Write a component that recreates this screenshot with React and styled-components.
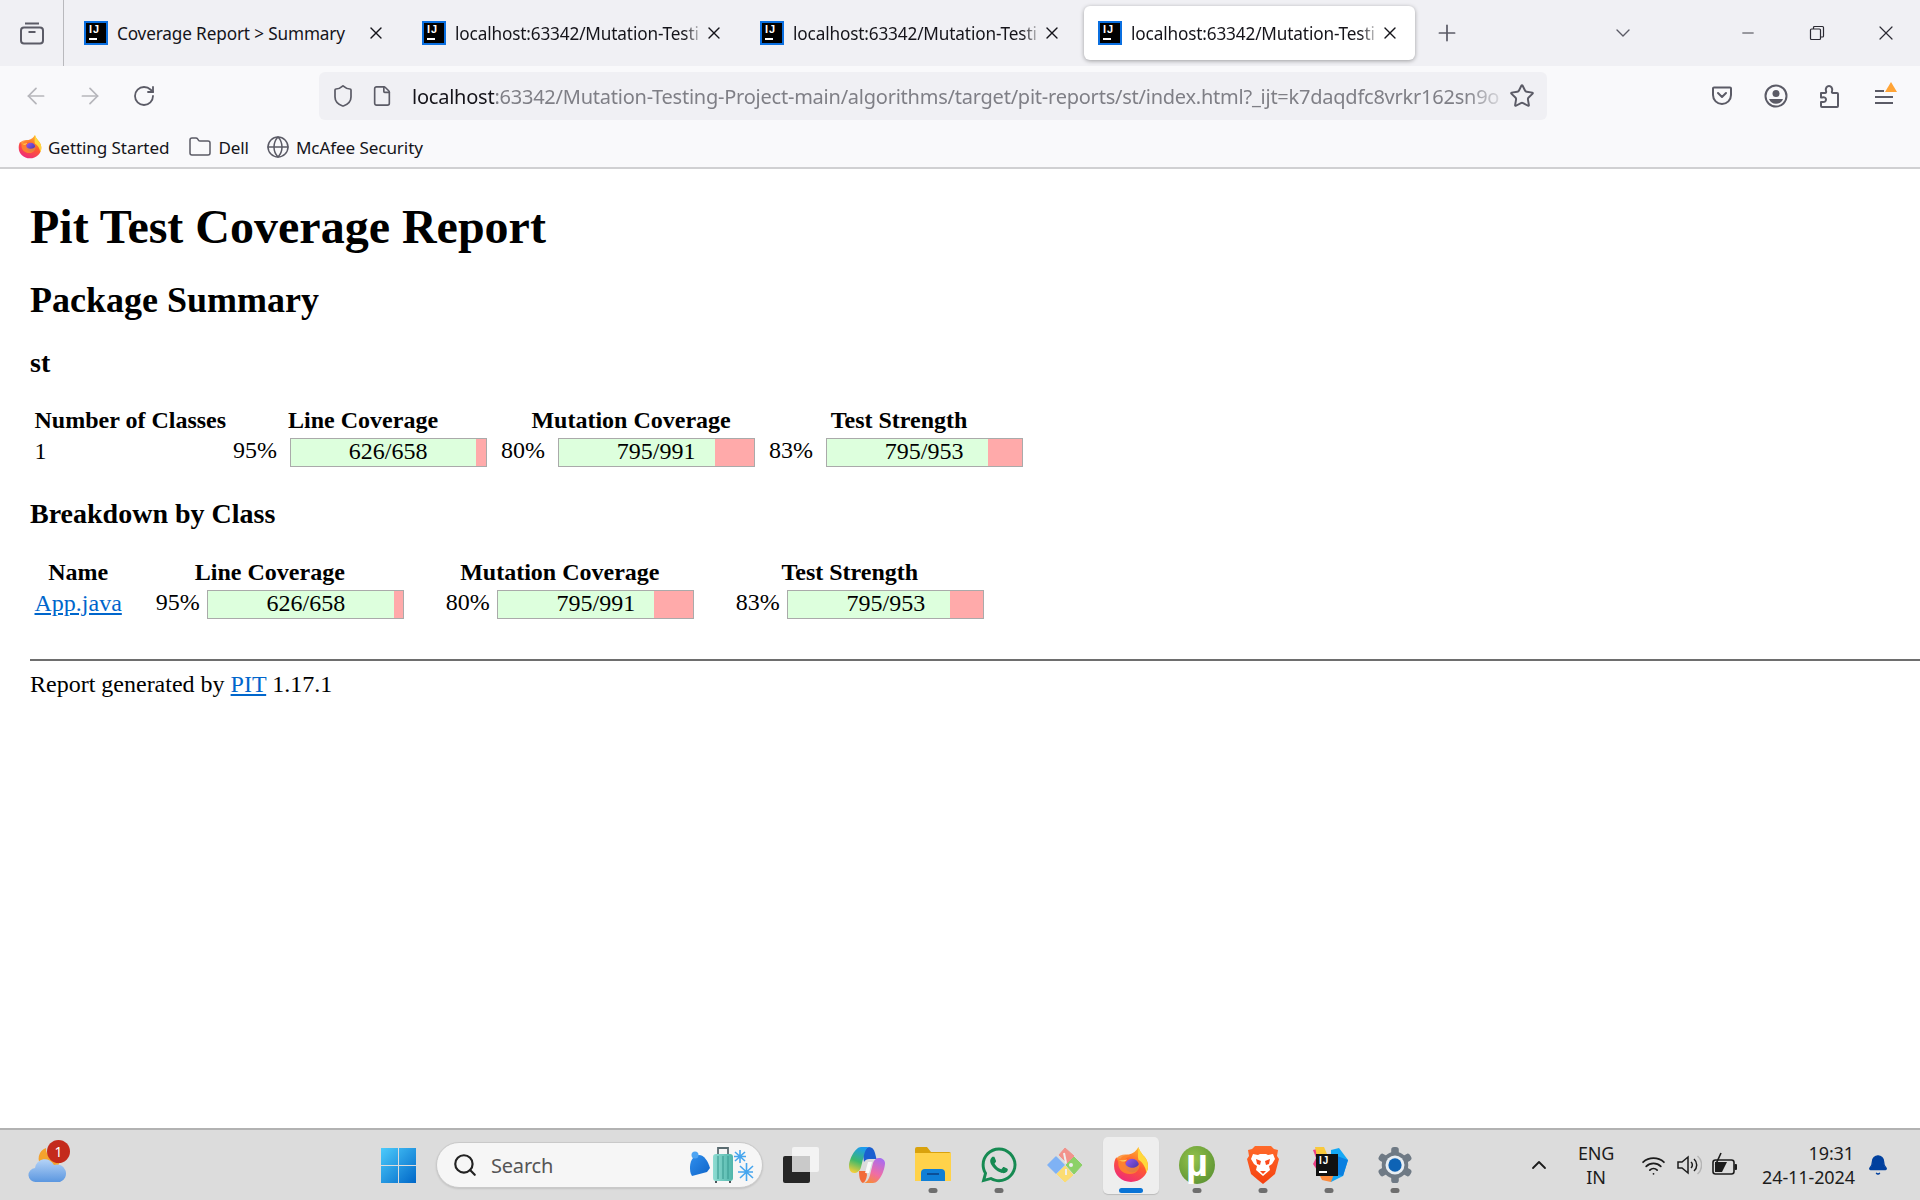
import React from "react";
import styled, { createGlobalStyle } from "styled-components";
import {
  ArrowLeft, ArrowRight, RotateCw, Shield, File, Star, X, Plus, ChevronDown, ChevronUp,
  Minus, Folder, Globe, Search, Wifi, Bell,
} from "lucide-react";
import { FaWhatsapp } from "react-icons/fa";

const Global = createGlobalStyle`
  html, body { margin: 0; padding: 0; background: #fff; }
  body { font-family: "Liberation Serif", "Times New Roman", serif; font-size: 24px; color: #000; }
`;

const uiFont = `"Noto Sans", "Open Sans", sans-serif`;

const Screen = styled.div`
  width: 1920px; height: 1200px; display: flex; flex-direction: column; overflow: hidden;
`;

/* ---------- browser chrome ---------- */
const TabBar = styled.div`
  height: 66px; background: #f0f0f4; display: flex; align-items: flex-start; flex: none;
  font-family: ${uiFont}; color: #15141a;
`;
const ViewButton = styled.div`
  width: 64px; height: 66px; box-sizing: border-box; border-right: 1px solid #b9b9bd; flex: none;
  display: flex; align-items: center; justify-content: center; color: #5b5b66;
`;
const TabList = styled.div`
  display: flex; gap: 7px; padding: 6px 0 0 6px; flex: none;
`;
const Tab = styled.div`
  width: 331px; height: 54px; box-sizing: border-box; padding: 0 15px 0 14px; display: flex; align-items: center;
  border-radius: 6px; flex: none;
  background: ${p => (p.$active ? "#fff" : "transparent")};
  box-shadow: ${p => (p.$active ? "0 1px 4px rgba(0,0,0,.35)" : "none")};
`;
const Favicon = styled.div`
  width: 24px; height: 24px; box-sizing: border-box; background: #000; border: 2px solid #0a6fe0;
  color: #fff; position: relative; flex: none; font: bold 11px/12px "Liberation Sans", sans-serif;
  padding-left: 3px; letter-spacing: 1px;
  &::after { content: ""; position: absolute; left: 3px; bottom: 3px; width: 8px; height: 2px; background: #fff; }
`;
const TabLabel = styled.div`
  flex: 1; min-width: 0; margin: 0 0 0 9px; font-size: 17.2px; white-space: nowrap; letter-spacing: -0.15px;
  mask-image: ${p => (p.$fade ? "linear-gradient(to right, #000 92%, transparent 100%)" : "none")};
`;
const WindowControls = styled.div`
  display: flex; align-items: center; height: 66px; color: #2b2a33; flex: none;
`;
const NewTab = styled.div`
  margin-left: 19px; color: #5b5b66; display: flex;
`;
const ListAll = styled.div`
  margin-left: 151px; color: #5b5b66; display: flex;
`;
const WinButton = styled.div`
  width: 69px; display: flex; justify-content: center; margin-left: ${p => p.$ml || 0}px;
`;
const RestoreIcon = () => (
  <svg width="16" height="16" viewBox="0 0 16 16" fill="none" stroke="#2b2a33" strokeWidth="1.2">
    <rect x="1.5" y="4" width="10" height="10.5" rx="1" />
    <path d="M4.5 4V2.5a1 1 0 0 1 1-1h8a1 1 0 0 1 1 1v8.5a1 1 0 0 1-1 1h-2" />
  </svg>
);
const ViewIcon = () => (
  <svg width="26" height="26" viewBox="0 0 26 26" fill="none" stroke="#5b5b66" strokeWidth="2">
    <path d="M6 3.500h14" />
    <rect x="2" y="7.500" width="22" height="16" rx="3" />
    <path d="M9.500 12h7" />
  </svg>
);

const NavBar = styled.div`
  height: 54px; background: #f9f9fb; display: flex; align-items: flex-start; padding-top: 6px; box-sizing: border-box; flex: none;
  font-family: ${uiFont};
`;
const NavButtons = styled.div`
  width: 319px; height: 48px; display: flex; align-items: center; flex: none; color: #5b5b66;
`;
const NavBtn = styled.div`
  width: 54px; display: flex; justify-content: center; color: ${p => (p.$off ? "#b6b6bb" : "#5b5b66")};
  margin-left: ${p => p.$ml || 0}px;
`;
const UrlBar = styled.div`
  width: 1228px; height: 48px; background: #f0f0f4; border-radius: 6px; display: flex; align-items: center; flex: none;
  color: #5b5b66; box-sizing: border-box; padding: 0 12px 0 12px;
`;
const UrlText = styled.div`
  width: 1097px; margin-left: 19px; font-size: 20px; white-space: nowrap; color: #7f7f86; letter-spacing: -0.235px;
  mask-image: linear-gradient(to right, #000 96%, transparent 100%);
  b { font-weight: 400; color: #15141a; }
`;
const NavIcons = styled.div`
  display: flex; align-items: center; height: 48px; margin-left: 164px; gap: 31px; color: #5b5b66;
`;
const MenuBars = styled.div`
  width: 18px; height: 14px; position: relative; display: flex; flex-direction: column; justify-content: space-between; align-items: flex-start; margin: 2px 0 0 5px;
  i { display: block; height: 2px; background: #5b5b66; width: 18px; }
  i:first-child { width: 9px; }
  &::after { content: ""; position: absolute; right: -4px; top: -8px; border-left: 6px solid transparent; border-right: 6px solid transparent; border-bottom: 10px solid #ffa436; }
`;
const PocketIcon = () => (
  <svg width="22" height="22" viewBox="0 0 22 22" fill="none" stroke="#5b5b66" strokeWidth="2" strokeLinecap="round" strokeLinejoin="round">
    <path d="M2 3.500a1 1 0 0 1 1-1h16a1 1 0 0 1 1 1V10a9 9 0 0 1-18 0z" />
    <path d="M7 8l4 4 4-4" />
  </svg>
);
const AccountIcon = () => (
  <svg width="24" height="24" viewBox="0 0 24 24" fill="none">
    <circle cx="12" cy="12" r="10.500" stroke="#5b5b66" strokeWidth="2" />
    <circle cx="12" cy="9.500" r="3.500" fill="#5b5b66" />
    <path d="M5 15h14a7.500 7.500 0 0 1-14 0z" fill="#5b5b66" />
  </svg>
);
const PuzzleIcon = () => (
  <svg width="20" height="24" viewBox="0 0 20 24" fill="none" stroke="#5b5b66" strokeWidth="2" strokeLinejoin="round">
    <path d="M2 9h4c1 0 1.500-.8 1-2C6.200 4 8 2 10 2s3.800 2 3 5c-.4 1.200 0 2 1 2h4a1 1 0 0 1 1 1v12a1 1 0 0 1-1 1H3a1 1 0 0 1-1-1v-4h1c3 .5 4-1 4-2.500S6 13 3 13.500H2z" />
  </svg>
);

const Bookmarks = styled.div`
  height: 49px; background: #f9f9fb; border-bottom: 2px solid #d0d0d2; box-sizing: border-box; display: flex; align-items: center;
  padding: 7px 0 0 18px; flex: none; font-family: ${uiFont}; font-size: 17.1px; color: #15141a; letter-spacing: -0.1px;
`;
const Bookmark = styled.div`
  display: flex; align-items: center; gap: 6px; margin-right: ${p => p.$mr || 20}px; color: #15141a;
  svg { color: #5b5b66; }
`;

const Firefox = ({ size = 24, id = "ff" }) => (
  <svg width={size} height={size} viewBox="0 0 34 34">
    <defs>
      <linearGradient id={`${id}a`} x1="0.75" y1="0.05" x2="0.3" y2="1">
        <stop offset="0" stopColor="#ffb52e" />
        <stop offset="0.45" stopColor="#ff5a2e" />
        <stop offset="1" stopColor="#ee2a7b" />
      </linearGradient>
      <linearGradient id={`${id}b`} x1="0" y1="0" x2="1" y2="1">
        <stop offset="0" stopColor="#9a5cf0" />
        <stop offset="1" stopColor="#3b2f9f" />
      </linearGradient>
    </defs>
    <path d="M3 10C1.500 12.500 1 15 1 18c0 8.500 7 15 16 15s16-6.500 16-15c0-3-1-6-3-8.500C26 5 25 3 24 0c-2 4-5 6-9 7-3 .6-6 1-8 4-1.500 0-3 0-4-1z" fill={`url(#${id}a)`} />
    <path d="M24 0c1 3 2 5 6 9.500 2 2.500 3 5.500 3 8.500 0 2.500-.6 4.500-1.500 6.500C31 19 28 14.500 24 12c-1-3 0-8 0-12z" fill="#ffd83b" />
    <circle cx="18" cy="17.500" r="6.500" fill={`url(#${id}b)`} />
    <path d="M3 11c3.500-4.500 10-5 15-2.500-3.500.4-6 1.800-7 4.500 0 3 2 6 6 6.500 4 .5 7-2 8-4 .6 5-3 10-9 10-6.500 0-11-4.500-11-10 0-1.500 0-3-2-4.500z" fill="#ff8a2b" opacity=".85" />
    <path d="M5 12c3 1 6 .5 8-.5 0 2-3 3.500-8 .5z" fill="#ffd05a" />
  </svg>
);

/* ---------- report ---------- */
const Page = styled.main`
  flex: 1; padding: 30px 0 0 30px; background: #fff; overflow: hidden;
`;
const H1 = styled.h1`
  margin: 0 0 26px; font-size: 48px; line-height: 55px; font-weight: 700;
`;
const H2 = styled.h2`
  margin: 0 0 26px; font-size: 36px; line-height: 41px; font-weight: 700;
`;
const H3 = styled.h3`
  margin: 0 0 ${p => p.$mb || 24}px; font-size: 28px; line-height: 32px; font-weight: 700;
`;
const Table = styled.table`
  border-collapse: separate; border-spacing: 3px; table-layout: fixed; margin-bottom: ${p => p.$mb || 0}px;
  th, td { padding: 1.500px; font-size: 24px; line-height: 24px; }
  th { text-align: center; font-weight: 700; white-space: nowrap; }
  td { vertical-align: top; line-height: 27px; }
`;
const Cov = styled.div`
  display: flex; justify-content: flex-end; align-items: center;
`;
const Pct = styled.span`
  margin-right: ${p => p.$gap}px; position: relative; top: -2px;
`;
const Bar = styled.div`
  width: 195px; height: 27px; margin: 0 7.500px; border: 1.500px solid #aaa; background: #ffaaaa; position: relative; flex: none;
`;
const Done = styled.div`
  height: 100%; background: #ddffdd; width: ${p => p.$pct}%;
`;
const Legend = styled.div`
  position: absolute; inset: 0; text-align: center; line-height: 25px;
`;
const BlueLink = styled.a`
  color: #0066cc; text-decoration: underline;
`;
const Rule = styled.hr`
  margin: 0 0 10px; border: 0; border-top: 2px solid #6e6e6e; height: 0;
`;
const Footer = styled.div`
  line-height: 27px;
`;

const Coverage = ({ pct, legend, gap }) => (
  <Cov>
    <Pct $gap={gap}>{pct}%</Pct>
    <Bar>
      <Done $pct={pct} />
      <Legend>{legend}</Legend>
    </Bar>
  </Cov>
);

/* ---------- taskbar ---------- */
const Taskbar = styled.footer`
  height: 72px; flex: none; background: #dcdcdc; border-top: 2px solid #b2b2b2; box-sizing: border-box; display: flex; align-items: center;
  font-family: ${uiFont}; color: #1c1c1c;
`;
const Weather = styled.div`
  width: 365px; height: 100%; position: relative; flex: none; padding-left: 28px; box-sizing: border-box; display: flex; align-items: center;
`;
const Badge = styled.span`
  position: absolute; left: 47px; top: 10px; width: 23px; height: 23px; border-radius: 50%; background: #c42b1c; color: #fff;
  font-size: 14px; line-height: 23px; text-align: center;
`;
const Slot = styled.div`
  height: 57px; flex: none; display: flex; align-items: center; justify-content: center; position: relative; border-radius: 5px;
  background: ${p => (p.$active ? "#eeeeee" : "transparent")};
  box-shadow: ${p => (p.$active ? "0 1px 1px rgba(0,0,0,.15)" : "none")};
  width: ${p => (p.$active ? 56 : 66)}px;
  margin: 0 ${p => (p.$active ? 5 : 0)}px;
  &::after {
    content: ""; display: ${p => (p.$dot ? "block" : "none")}; position: absolute; bottom: 1px; left: 50%; transform: translateX(-50%);
    width: ${p => (p.$active ? 24 : 9)}px; height: 5px; border-radius: 3px; background: ${p => (p.$active ? "#0a74d6" : "#6e6e6e")};
  }
`;
const SearchPill = styled.div`
  width: 327px; height: 46px; margin: 0 5px; box-sizing: border-box; background: #f6f6f6; border-radius: 23px; border: 1px solid #c9c9c9;
  display: flex; align-items: center; padding: 0 8px 0 15px; flex: none; color: #222; box-shadow: 0 1px 2px rgba(0,0,0,.12);
`;
const SearchText = styled.span`
  margin-left: 13px; font-size: 20px; color: #555; flex: 1; letter-spacing: -.2px;
`;
const Tray = styled.div`
  margin-left: auto; padding-right: 31px; display: flex; align-items: center; height: 100%;
`;
const Lang = styled.div`
  width: 36px; margin-left: 27px; text-align: center; font-size: 18px; line-height: 24px; letter-spacing: -.2px;
`;
const Clock = styled.div`
  margin-left: 24px; text-align: right; font-size: 18px; line-height: 24px; width: 92px; letter-spacing: -.1px; white-space: nowrap;
`;
const BellWrap = styled.div`
  margin-left: 13px; display: flex; color: #00409e;
`;
const TrayIcons = styled.div`
  display: flex; align-items: center; gap: 10px; margin-left: 27px;
`;
const MuLetter = styled.span`
  position: absolute; color: #fff; font: bold 38px/38px "Liberation Sans", sans-serif; top: 7px; left: 50%; transform: translateX(-50%);
`;
const IdeaText = styled.span`
  position: absolute; left: 20px; top: 17px; width: 22px; height: 22px; background: #111; color: #fff;
  font: bold 10px/13px "Liberation Sans", sans-serif; padding-left: 3px; box-sizing: border-box; letter-spacing: 1px;
  &::after { content: ""; position: absolute; left: 3px; bottom: 3px; width: 8px; height: 1.500px; background: #fff; }
`;

const WeatherIcon = () => (
  <svg width="40" height="38" viewBox="0 0 40 38">
    <defs>
      <linearGradient id="cl" x1="0" y1="0" x2="0" y2="1"><stop offset="0" stopColor="#b5d3f7" /><stop offset="1" stopColor="#5b97e0" /></linearGradient>
    </defs>
    <path d="M18 2a11 11 0 1 0 14 14A14 14 0 0 1 18 2z" fill="#f4a22d" />
    <path d="M8 36a7 7 0 0 1-1-14 10 10 0 0 1 19-3 8.500 8.500 0 0 1 6 17z" fill="url(#cl)" />
  </svg>
);
const WinLogo = () => (
  <svg width="35" height="35" viewBox="0 0 35 35">
    <defs>
      <linearGradient id="w" x1="0" y1="0" x2="1" y2="1"><stop offset="0" stopColor="#4ccbfb" /><stop offset="1" stopColor="#0067c8" /></linearGradient>
    </defs>
    <path d="M0 0h17v17H0zM18 0h17v17H18zM0 18h17v17H0zM18 18h17v17H18z" fill="url(#w)" />
  </svg>
);
const SearchDeco = () => (
  <svg width="65" height="36" viewBox="0 0 65 36">
    <defs>
      <linearGradient id="hat" x1="0" y1="0" x2="1" y2="1"><stop offset="0" stopColor="#2f8fee" /><stop offset="1" stopColor="#0f64c8" /></linearGradient>
      <linearGradient id="bag" x1="0" y1="0" x2="1" y2="0"><stop offset="0" stopColor="#8fdcd2" /><stop offset="1" stopColor="#4fb5aa" /></linearGradient>
    </defs>
    <path d="M1 20C1 12 6 8 10 8c5 0 9 6 11 13l-3 4-15 4c-2-3-2-6-2-9z" fill="url(#hat)" />
    <circle cx="6" cy="8" r="3.500" fill="#4ea4f2" />
    <rect x="24" y="7" width="20" height="27" rx="3" fill="url(#bag)" />
    <path d="M29 7V1h10v6" fill="none" stroke="#5a6b70" strokeWidth="1.800" />
    <path d="M29 9v23M34 9v23M39 9v23" stroke="#3f9f95" strokeWidth="1.200" />
    <path d="M27 34v2M41 34v2" stroke="#4a5559" strokeWidth="2" />
    <path d="M46 5l10 9M56 5l-10 9M51 3v13M45 9.500h12M51 19l13 12M64 19L51 31M57.500 16v18M49 25h15" stroke="#45a5ee" strokeWidth="1.600" fill="none" />
  </svg>
);
const StoreIcon = () => (
  <svg width="36" height="36" viewBox="0 0 36 36">
    <rect x="9" y="0" width="27" height="25" rx="2" fill="#f3f3f3" />
    <rect x="0" y="9" width="27" height="27" rx="2" fill="#262626" />
    <rect x="9" y="9" width="18" height="16" fill="#c9c9c9" />
  </svg>
);
const CopilotIcon = () => (
  <svg width="36" height="38" viewBox="0 0 36 38">
    <defs>
      <linearGradient id="c1" x1="0.6" y1="0" x2="0.3" y2="1"><stop offset="0" stopColor="#1c9bf0" /><stop offset=".55" stopColor="#3fb96b" /><stop offset="1" stopColor="#f2cf3a" /></linearGradient>
      <linearGradient id="c2" x1="0.7" y1="0" x2="0.3" y2="1"><stop offset="0" stopColor="#a86cf0" /><stop offset=".6" stopColor="#f06da5" /><stop offset="1" stopColor="#f78a3c" /></linearGradient>
    </defs>
    <path d="M20 1c3 0 5 2 6 6l1.500 6H20c-2 0-4 1-5 3l-1-7c1-4 3-8 6-8z" fill="#1a5fd0" />
    <path d="M10 25h7l1 4c-.5 4-2 7-4 8-3-1-4-6-4-12z" fill="#f26b3a" />
    <path d="M12 1h8c-3 1-4 4-5 8l-3 12c-1 4-4 6-7 6-3 0-5-3-5-7C0 14 6 1 12 1z" fill="url(#c1)" />
    <path d="M36 17c0 6-5 20-12 20h-9c3-1 5-4 6-8l3-12c1-3 3-5 6-5 3 0 6 2 6 5z" fill="url(#c2)" />
    <path d="M19 16h4l-3 11h-4z" fill="#fff" opacity=".85" />
  </svg>
);
const FolderIcon = () => (
  <svg width="36" height="36" viewBox="0 0 36 36">
    <path d="M0 2a2 2 0 0 1 2-2h10l4 5h18a2 2 0 0 1 2 2v6H0z" fill="#d9a20d" />
    <path d="M0 6h36v28H0z" fill="#ffd24a" />
    <path d="M6 34v-8a4 4 0 0 1 4-4h16a4 4 0 0 1 4 4v8z" fill="#0f7fd6" />
    <rect x="12" y="26" width="12" height="2" fill="#0b4f96" />
  </svg>
);
const GitIcon = () => (
  <svg width="36" height="36" viewBox="0 0 36 36" strokeLinejoin="round">
    <path d="M1 18l8-8 8 8-8 8z" fill="#7fb2f5" stroke="#7fb2f5" strokeWidth="1.500" />
    <path d="M18 1l9 8-7 7-8-8z" fill="#f2938c" stroke="#f2938c" strokeWidth="1" />
    <path d="M27 10l8 8-8 9-8-9z" fill="#8cd168" stroke="#8cd168" strokeWidth="1" />
    <path d="M10 27l8-8 8 9-8 7z" fill="#fbdc72" stroke="#fbdc72" strokeWidth="1" />
    <path d="M17 6l2 10M19 22v6" stroke="#eee" strokeWidth="2" />
    <circle cx="24" cy="18" r="2" fill="#eee" />
  </svg>
);
const UTorrent = () => (
  <svg width="36" height="38" viewBox="0 0 36 38">
    <defs>
      <radialGradient id="ut" cx=".4" cy=".35" r=".7"><stop offset="0" stopColor="#93c24a" /><stop offset="1" stopColor="#5f9535" /></radialGradient>
    </defs>
    <ellipse cx="18" cy="19" rx="18" ry="19" fill="url(#ut)" />
  </svg>
);
const Brave = () => (
  <svg width="32" height="38" viewBox="0 0 32 38">
    <defs>
      <linearGradient id="br" x1="0" y1="0" x2="0" y2="1"><stop offset="0" stopColor="#ff6a2a" /><stop offset="1" stopColor="#f5400f" /></linearGradient>
    </defs>
    <path d="M8 0h16l3 3 4 1-1 6 2 3-4 15-7 6-5 4-5-4-7-6L0 13l2-3-1-6 4-1z" fill="url(#br)" />
    <path d="M6 8l5 1 2-1h6l2 1 5-1 2 5-3 5-3 2 1 4-7 6-7-6 1-4-3-2-3-5z" fill="#fff" />
    <path d="M9 13l5 2-1 4-3-1zM23 13l-5 2 1 4 3-1zM13 25h6l-3 3z" fill="#fb4a1c" />
  </svg>
);
const IdeaBack = () => (
  <svg width="38" height="38" viewBox="0 0 38 38">
    <path d="M3 4l8-2 6 8-6 20-8-12 3-6z" fill="#ee3f86" />
    <path d="M5 1h9l3 7-10 3z" fill="#f9c93c" />
    <path d="M21 4l8-2 9 12-5 16-12 6z" fill="#14a8f5" />
    <path d="M27 10l11 4-5 16-9-2z" fill="#0a7fe0" />
    <path d="M7 24l5 10 9 2 3-8z" fill="#fb8a3c" />
  </svg>
);
const Gear = () => (
  <svg width="38" height="36" viewBox="0 0 38 38">
    <g fill="#6f7a85">
      <circle cx="19" cy="19" r="14" />
      <rect x="15" y="0" width="8" height="38" rx="3" />
      <rect x="15" y="0" width="8" height="38" rx="3" transform="rotate(60 19 19)" />
      <rect x="15" y="0" width="8" height="38" rx="3" transform="rotate(120 19 19)" />
    </g>
    <circle cx="19" cy="19" r="10" fill="#e8eef3" />
    <circle cx="19" cy="19" r="7" fill="#0e63b5" />
  </svg>
);
const Volume = () => (
  <svg width="26" height="22" viewBox="0 0 26 22" fill="none" stroke="#1c1c1c" strokeWidth="1.500">
    <path d="M2 8v6h4l6 5V3L6 8z" />
    <path d="M15 8a4 4 0 0 1 0 6M18 5a8 8 0 0 1 0 12" />
    <path d="M21.500 2a12 12 0 0 1 0 18" stroke="#b5b5b5" />
  </svg>
);
const Battery = () => (
  <svg width="26" height="26" viewBox="0 0 26 26">
    <rect x="1" y="8" width="21" height="14" rx="2.500" fill="none" stroke="#1c1c1c" strokeWidth="1.600" />
    <rect x="22.500" y="12" width="2.500" height="6" rx="1" fill="#1c1c1c" />
    <path d="M3 10h12l-5 10H3z" fill="#1c1c1c" />
    <path d="M9 1L4 12h4l-1 6" stroke="#1c1c1c" strokeWidth="1.600" fill="none" />
  </svg>
);

const url = "63342/Mutation-Testing-Project-main/algorithms/target/pit-reports/st/index.html?_ijt=k7daqdfc8vrkr162sn9o";
const tabUrl = "localhost:63342/Mutation-Testi";

export default function App() {
  return (
    <Screen>
      <Global />
      <TabBar>
        <ViewButton><ViewIcon /></ViewButton>
        <TabList>
          <Tab>
            <Favicon>IJ</Favicon>
            <TabLabel>Coverage Report &gt; Summary</TabLabel>
            <X size={20} strokeWidth={1.6} />
          </Tab>
          <Tab>
            <Favicon>IJ</Favicon>
            <TabLabel $fade>{tabUrl}</TabLabel>
            <X size={20} strokeWidth={1.6} />
          </Tab>
          <Tab>
            <Favicon>IJ</Favicon>
            <TabLabel $fade>{tabUrl}</TabLabel>
            <X size={20} strokeWidth={1.6} />
          </Tab>
          <Tab $active>
            <Favicon>IJ</Favicon>
            <TabLabel $fade>{tabUrl}</TabLabel>
            <X size={20} strokeWidth={1.6} />
          </Tab>
        </TabList>
        <WindowControls>
          <NewTab><Plus size={26} strokeWidth={1.6} /></NewTab>
          <ListAll><ChevronDown size={24} strokeWidth={1.4} /></ListAll>
          <WinButton $ml={78}><Minus size={18} strokeWidth={1.2} /></WinButton>
          <WinButton><RestoreIcon /></WinButton>
          <WinButton><X size={24} strokeWidth={1.2} /></WinButton>
        </WindowControls>
      </TabBar>
      <NavBar>
        <NavButtons>
          <NavBtn $off $ml={9}><ArrowLeft size={26} strokeWidth={1.6} /></NavBtn>
          <NavBtn $off><ArrowRight size={26} strokeWidth={1.6} /></NavBtn>
          <NavBtn><RotateCw size={24} strokeWidth={1.8} /></NavBtn>
        </NavButtons>
        <UrlBar>
          <Shield size={24} strokeWidth={1.7} />
          <File size={22} strokeWidth={1.8} style={{ marginLeft: 16 }} />
          <UrlText><b>localhost</b>:{url}</UrlText>
          <Star size={26} strokeWidth={1.8} />
        </UrlBar>
        <NavIcons>
          <PocketIcon />
          <AccountIcon />
          <PuzzleIcon />
          <MenuBars><i /><i /><i /></MenuBars>
        </NavIcons>
      </NavBar>
      <Bookmarks>
        <Bookmark $mr={19}><Firefox id="bm" />Getting Started</Bookmark>
        <Bookmark $mr={17}><Folder size={24} strokeWidth={1.5} />Dell</Bookmark>
        <Bookmark><Globe size={24} strokeWidth={1.5} />McAfee Security</Bookmark>
      </Bookmarks>

      <Page>
        <H1>Pit Test Coverage Report</H1>
        <H2>Package Summary</H2>
        <H3>st</H3>
        <Table $mb={27}>
          <colgroup>
            <col width="192" /><col width="265" /><col width="265" /><col width="265" />
          </colgroup>
          <thead>
            <tr><th>Number of Classes</th><th>Line Coverage</th><th>Mutation Coverage</th><th>Test Strength</th></tr>
          </thead>
          <tbody>
            <tr>
              <td>1</td>
              <td><Coverage gap={5} pct={95} legend="626/658" /></td>
              <td><Coverage gap={5} pct={80} legend="795/991" /></td>
              <td><Coverage gap={5} pct={83} legend="795/953" /></td>
            </tr>
          </tbody>
        </Table>
        <H3 $mb={25}>Breakdown by Class</H3>
        <Table $mb={36}>
          <colgroup>
            <col width="90" /><col width="287" /><col width="287" /><col width="287" />
          </colgroup>
          <thead>
            <tr><th>Name</th><th>Line Coverage</th><th>Mutation Coverage</th><th>Test Strength</th></tr>
          </thead>
          <tbody>
            <tr>
              <td><BlueLink href="#">App.java</BlueLink></td>
              <td><Coverage gap={0} pct={95} legend="626/658" /></td>
              <td><Coverage gap={0} pct={80} legend="795/991" /></td>
              <td><Coverage gap={0} pct={83} legend="795/953" /></td>
            </tr>
          </tbody>
        </Table>
        <Rule />
        <Footer>Report generated by <BlueLink href="#">PIT</BlueLink> 1.17.1</Footer>
      </Page>

      <Taskbar>
        <Weather><WeatherIcon /><Badge>1</Badge></Weather>
        <Slot><WinLogo /></Slot>
        <SearchPill>
          <Search size={26} strokeWidth={2} />
          <SearchText>Search</SearchText>
          <SearchDeco />
        </SearchPill>
        <Slot><StoreIcon /></Slot>
        <Slot><CopilotIcon /></Slot>
        <Slot $dot><FolderIcon /></Slot>
        <Slot $dot><FaWhatsapp size={40} color="#168a52" /></Slot>
        <Slot><GitIcon /></Slot>
        <Slot $dot $active><Firefox id="tb" size={36} /></Slot>
        <Slot $dot><UTorrent /><MuLetter>µ</MuLetter></Slot>
        <Slot $dot><Brave /></Slot>
        <Slot $dot><IdeaBack /><IdeaText>IJ</IdeaText></Slot>
        <Slot $dot><Gear /></Slot>
        <Tray>
          <ChevronUp size={24} strokeWidth={1.8} />
          <Lang>ENG<br />IN</Lang>
          <TrayIcons>
            <Wifi size={25} strokeWidth={1.7} />
            <Volume />
            <Battery />
          </TrayIcons>
          <Clock>19:31<br />24-11-2024</Clock>
          <BellWrap><Bell size={22} fill="#00409e" strokeWidth={1.5} /></BellWrap>
        </Tray>
      </Taskbar>
    </Screen>
  );
}
